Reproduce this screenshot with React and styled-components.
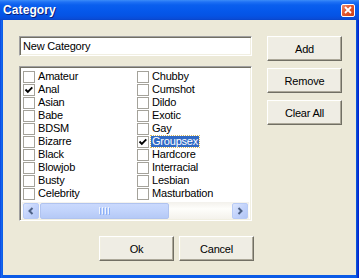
import React from "react";
import styled, { createGlobalStyle } from "styled-components";

const GlobalStyle = createGlobalStyle`
  html, body { margin: 0; padding: 0; background: #0A4BDB; }
  * { box-sizing: border-box; }
`;

const Window = styled.div`
  width: 359px;
  height: 278px;
  display: flex;
  flex-direction: column;
  background: linear-gradient(90deg, #0831D9 0px, #166AEE 1px, #0A5AE6 3px, #0A5AE6 356px, #0746D0 357px, #0019CF 359px);
  font-family: "Liberation Sans", Arial, sans-serif;
`;

const TitleBar = styled.div`
  height: 20px;
  flex: none;
  display: flex;
  align-items: center;
  justify-content: space-between;
  padding: 0 4px 0 3px;
  background: linear-gradient(180deg, #3C8CF8 0px, #1F71F5 2px, #0A5FEE 5px, #0558EB 11px, #0553E4 16px, #0A4BD6 19px, #0644C8 20px);
`;

const Title = styled.span`
  color: #fff;
  font-weight: bold;
  font-size: 12px;
  letter-spacing: 0.1px;
  text-shadow: 1px 1px 0 #0A1E7A;
`;

const CloseButton = styled.div`
  width: 14px;
  height: 13px;
  border: 1px solid #fff;
  border-radius: 2px;
  background: linear-gradient(135deg, #F08C6C 0%, #E2572F 45%, #CC4118 100%);
  display: flex;
  align-items: center;
  justify-content: center;
`;

const Body = styled.div`
  flex: 1;
  margin: 0 3px 3px 3px;
  background: #ECE9D8;
  padding: 16px 0 0 16px;
  display: grid;
  grid-template-columns: 233px 75px;
  grid-template-rows: auto auto;
  column-gap: 15px;
  align-content: start;
  align-items: start;
  font-size: 11px;
  color: #000;
`;

const LeftCol = styled.div`
  display: flex;
  flex-direction: column;
  gap: 10px;
`;

const ButtonCol = styled.div`
  display: flex;
  flex-direction: column;
  gap: 7px;
`;

const Sunken = styled.div`
  background: #fff;
  border: 1px solid;
  border-color: #A0A0A0 #FFFFFF #FFFFFF #A0A0A0;
  box-shadow: inset 1px 1px 0 #716F64, inset -1px -1px 0 #F1EFE2;
`;

const TextBox = styled(Sunken)`
  height: 20px;
  display: flex;
  align-items: center;
  padding-left: 3px;
  letter-spacing: -0.2px;
`;

const ListBox = styled(Sunken)`
  height: 155px;
  padding: 3px 2px 1px 2px;
  display: flex;
  flex-direction: column;
`;

const Items = styled.div`
  display: grid;
  grid-auto-flow: column;
  grid-template-rows: repeat(10, 13px);
  grid-template-columns: 114px 114px;
  padding-left: 1px;
  margin-bottom: 2px;
  overflow: hidden;
`;

const Row = styled.div`
  display: flex;
  align-items: center;
  height: 13px;
  white-space: nowrap;
`;

const Check = styled.span`
  width: 12px;
  height: 12px;
  flex: none;
  border: 1px solid #A4A29A;
  background: #fff;
  display: flex;
  align-items: center;
  justify-content: center;
  margin-right: 2px;
`;

const Label = styled.span`
  line-height: 11px;
  padding: 0 1px;
  letter-spacing: -0.2px;
  background: ${(p) => (p.$selected ? "#316AC5" : "transparent")};
  color: ${(p) => (p.$selected ? "#fff" : "#000")};
  outline: ${(p) => (p.$selected ? "1px dotted #D8B860" : "none")};
`;

const ScrollBar = styled.div`
  height: 17px;
  display: flex;
  align-items: center;
  padding: 0 1px;
  background: linear-gradient(180deg, #F3F1EC 0%, #FEFEFB 40%, #F4F2EC 100%);
`;

const ArrowButton = styled.div`
  width: 16px;
  height: 16px;
  flex: none;
  border: 1px solid #B8CBF6;
  border-radius: 2px;
  background: linear-gradient(135deg, #DCE6FD 0%, #C3D3FB 50%, #B2C6F6 100%);
  display: flex;
  align-items: center;
  justify-content: center;
`;

const Track = styled.div`
  flex: 1;
  height: 16px;
  display: flex;
  align-items: center;
  padding-left: 1px;
`;

const Thumb = styled.div`
  width: 129px;
  height: 16px;
  border: 1px solid #B0C3EF;
  border-radius: 2px;
  background: linear-gradient(180deg, #CAD9FD 0%, #C1D3FB 50%, #B5C9F6 100%);
  display: flex;
  align-items: center;
  justify-content: center;
  gap: 1px;
`;

const Grip = styled.span`
  width: 1px;
  height: 7px;
  background: #EEF4FE;
  box-shadow: 1px 1px 0 #8CB0F8;
  margin-right: 1px;
`;

const Button = styled.div`
  width: 75px;
  height: 25px;
  display: flex;
  align-items: center;
  justify-content: center;
  background: #EFEDE4;
  border: 1px solid;
  border-color: #FFFFFF #716F64 #716F64 #FFFFFF;
  box-shadow: inset -1px -1px 0 #ACA899, inset 1px 1px 0 #F1EFE2;
  font-size: 11px;
  letter-spacing: -0.2px;
`;

const Footer = styled.div`
  grid-column: 1 / -1;
  margin-top: 15px;
  padding-left: 80px;
  display: flex;
  gap: 5px;
`;

const left = [
  "Amateur", "Anal", "Asian", "Babe", "BDSM", "Bizarre", "Black", "Blowjob", "Busty", "Celebrity",
];
const right = [
  "Chubby", "Cumshot", "Dildo", "Exotic", "Gay", "Groupsex", "Hardcore", "Interracial", "Lesbian", "Masturbation",
];
const checked = new Set(["Anal", "Groupsex"]);

const Tick = () => (
  <svg width="10" height="10" viewBox="0 0 10 10">
    <polyline points="1.5,4.5 3.8,6.8 8.3,2.3" fill="none" stroke="#000" strokeWidth="1.9" />
  </svg>
);

export default function App() {
  return (
    <>
      <GlobalStyle />
      <Window>
        <TitleBar>
          <Title>Category</Title>
          <CloseButton>
            <svg width="8" height="8" viewBox="0 0 8 8">
              <path d="M1 1 L7 7 M7 1 L1 7" stroke="#fff" strokeWidth="1.8" />
            </svg>
          </CloseButton>
        </TitleBar>
        <Body>
          <LeftCol>
            <TextBox>New Category</TextBox>
            <ListBox>
              <Items>
                {[...left, ...right].map((name) => (
                  <Row key={name}>
                    <Check>{checked.has(name) && <Tick />}</Check>
                    <Label $selected={name === "Groupsex"}>{name}</Label>
                  </Row>
                ))}
              </Items>
              <ScrollBar>
                <ArrowButton>
                  <svg width="8" height="8" viewBox="0 0 8 8">
                    <polyline points="5.5,1 2.5,4 5.5,7" fill="none" stroke="#4D6185" strokeWidth="2" />
                  </svg>
                </ArrowButton>
                <Track>
                  <Thumb>
                    <Grip />
                    <Grip />
                    <Grip />
                    <Grip />
                  </Thumb>
                </Track>
                <ArrowButton>
                  <svg width="8" height="8" viewBox="0 0 8 8">
                    <polyline points="2.5,1 5.5,4 2.5,7" fill="none" stroke="#4D6185" strokeWidth="2" />
                  </svg>
                </ArrowButton>
              </ScrollBar>
            </ListBox>
          </LeftCol>
          <ButtonCol>
            <Button>Add</Button>
            <Button>Remove</Button>
            <Button>Clear All</Button>
          </ButtonCol>
          <Footer>
            <Button>Ok</Button>
            <Button>Cancel</Button>
          </Footer>
        </Body>
      </Window>
    </>
  );
}
